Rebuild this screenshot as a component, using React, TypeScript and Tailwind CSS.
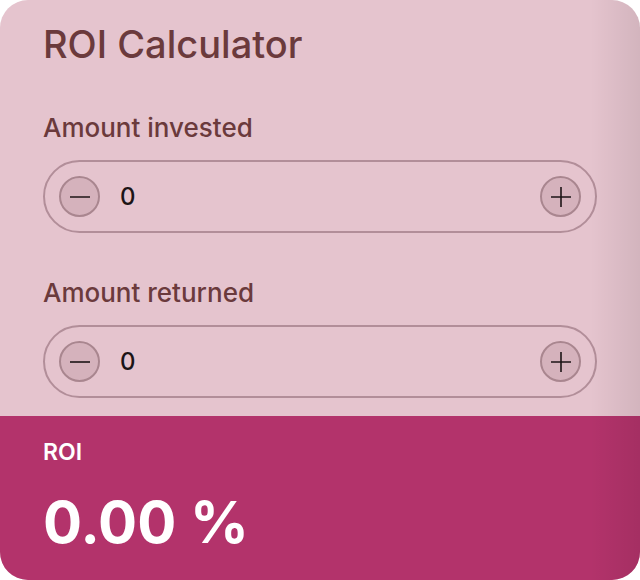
import { useState } from "react";

const Stepper = ({
  value,
  onChange,
}: {
  value: number;
  onChange: (v: number) => void;
}) => {
  return (
    <div className="flex h-[73px] items-center rounded-full border-2 border-[#b28e99] pl-[14px] pr-[14px]">
      <button
        onClick={() => onChange(Math.max(0, value - 1))}
        className="flex h-[41px] w-[41px] items-center justify-center rounded-full border-2 border-[#a9868f] bg-[#d5b2bc]"
      >
        <svg width="22" height="22" viewBox="0 0 22 22">
          <path d="M1 11h20" stroke="#1c1416" strokeWidth="1.6" />
        </svg>
      </button>
      <span className="ml-[20px] flex-1 text-[24px] font-medium text-[#1c1416]">
        {value}
      </span>
      <button
        onClick={() => onChange(value + 1)}
        className="flex h-[41px] w-[41px] items-center justify-center rounded-full border-2 border-[#a9868f] bg-[#d5b2bc]"
      >
        <svg width="22" height="22" viewBox="0 0 22 22">
          <path d="M1 11h20M11 1v20" stroke="#1c1416" strokeWidth="1.6" />
        </svg>
      </button>
    </div>
  );
};

const App = () => {
  const [invested, setInvested] = useState(0);
  const [returned, setReturned] = useState(0);

  const roi = invested > 0 ? ((returned - invested) / invested) * 100 : 0;

  return (
    <div className="bg-white font-['Inter',sans-serif]">
      <div className="relative flex h-[580px] w-[640px] flex-col overflow-hidden rounded-[28px] bg-[#e5c4ce]">
        <div className="px-[43px] pt-[21px]">
          <h1 className="text-[38px] font-medium leading-[46px] text-[#6b3a3c]">
            ROI Calculator
          </h1>

          <p className="mt-[45px] text-[26px] font-medium leading-[32px] text-[#6b3a3c]">
            Amount invested
          </p>
          <div className="mt-[16px]">
            <Stepper value={invested} onChange={setInvested} />
          </div>

          <p className="mt-[44px] text-[26px] font-medium leading-[32px] text-[#6b3a3c]">
            Amount returned
          </p>
          <div className="mt-[16px]">
            <Stepper value={returned} onChange={setReturned} />
          </div>
        </div>

        <div className="mt-auto h-[164px] bg-[#b3336b] px-[43px] pt-[22px] text-white">
          <p className="text-[23px] font-semibold leading-[28px]">ROI</p>
          <p className="mt-[24px] text-[58px] font-bold leading-[64px]">
            {roi.toFixed(2)} %
          </p>
        </div>

        {/* soft shade along the right edge */}
        <div className="pointer-events-none absolute inset-y-0 right-0 w-[50px] bg-gradient-to-r from-transparent to-black/[0.08]" />
      </div>
    </div>
  );
};

export default App;
